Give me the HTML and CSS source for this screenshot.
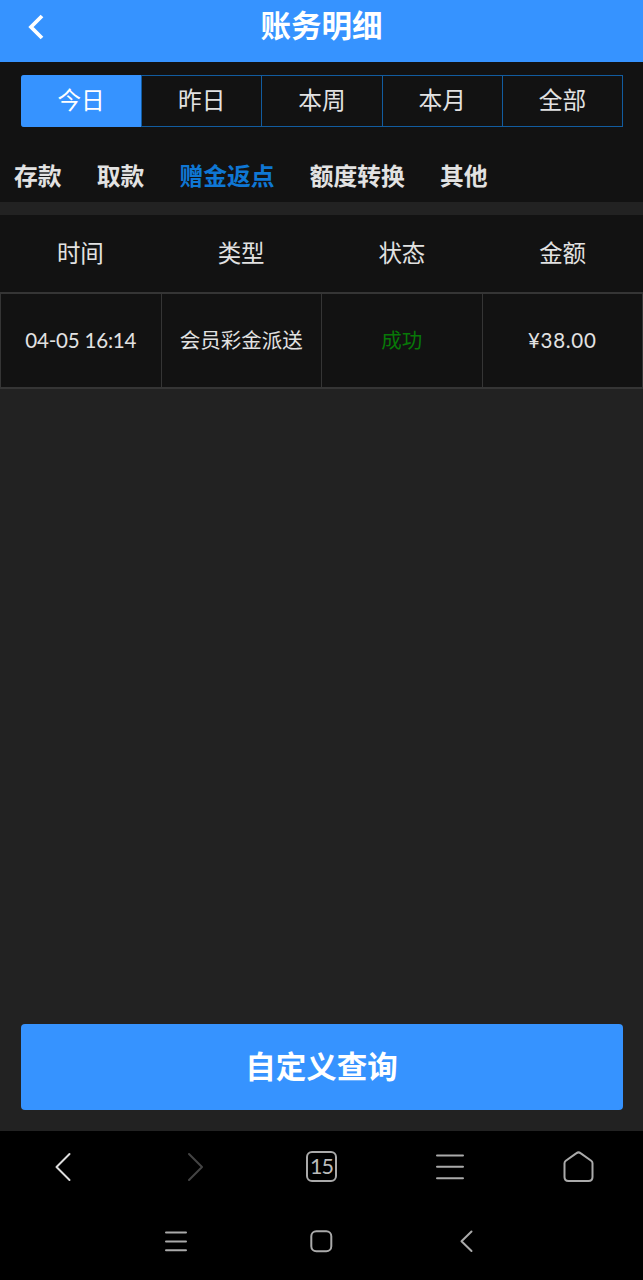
FILE: index.html
```html
<!DOCTYPE html>
<html lang="zh-CN">
<head>
    <meta charset="UTF-8">
    <meta name="viewport" content="width=device-width, initial-scale=1.0">
    <title>账务明细</title>
    <link rel="stylesheet" href="styles.css">
</head>
<body>

<header class="header">
    <svg class="back" width="20" height="28" viewBox="0 0 20 28"><path d="M16 3 L5 14 L16 25"/></svg>
    <h1 class="title">账务明细</h1>
</header>

<section class="filters">
    <div class="periods">
        <div class="period active">今日</div>
        <div class="period">昨日</div>
        <div class="period">本周</div>
        <div class="period">本月</div>
        <div class="period">全部</div>
    </div>
    <div class="types">
        <span>存款</span>
        <span>取款</span>
        <span class="active">赠金返点</span>
        <span>额度转换</span>
        <span>其他</span>
    </div>
</section>

<main class="records">
    <div class="row head">
        <div>时间</div>
        <div>类型</div>
        <div>状态</div>
        <div>金额</div>
    </div>
    <div class="row record">
        <div class="time">04-05 16:14</div>
        <div>会员彩金派送</div>
        <div class="success">成功</div>
        <div class="amount">¥38.00</div>
    </div>
</main>

<div class="footer">
    <button class="query">自定义查询</button>
</div>

<nav class="browser-bar">
    <svg class="bright" width="32" height="32" viewBox="0 0 32 32"><path d="M21.5 3 L8.5 16 L21.5 29"/></svg>
    <svg class="dim" width="32" height="32" viewBox="0 0 32 32"><path d="M12 3 L25 16 L12 29"/></svg>
    <span class="tabs">15</span>
    <svg width="32" height="32" viewBox="0 0 32 32"><path d="M3 4.5 H29 M3 15.8 H29 M3 27.2 H29"/></svg>
    <svg width="32" height="32" viewBox="0 0 32 32"><path d="M13.5 2.1 Q15.5 .6 17.5 2.1 L28.2 9.7 Q29.5 10.7 29.5 12.3 V26 Q29.5 30 25.5 30 H5.5 Q1.5 30 1.5 26 V12.3 Q1.5 10.7 2.8 9.7 Z"/></svg>
</nav>

<nav class="system-bar">
    <svg width="24" height="24" viewBox="0 0 24 24"><path d="M2 3.5 H22 M2 12.4 H22 M2 21.2 H22"/></svg>
    <svg width="24" height="24" viewBox="0 0 24 24"><rect x="2.3" y="2.3" width="20" height="20" rx="5"/></svg>
    <svg width="24" height="24" viewBox="0 0 24 24"><path d="M16.5 2.5 L6.5 12.3 L16.5 22"/></svg>
</nav>

</body>
</html>
```
FILE: styles.css
```css
* {
    box-sizing: border-box;
}

body {
    display: flex;
    flex-direction: column;
    height: 1280px;
    margin: 0;
    background-color: #222;
    color: #e2e2e2;
    font-family: Lato, "Noto Sans CJK SC", sans-serif;
}

svg {
    fill: none;
    stroke: #aaa;
    stroke-width: 2;
    stroke-linecap: round;
    stroke-linejoin: round;
}

.header {
    display: grid;
    grid-template-columns: 60px 1fr 60px;
    align-items: center;
    height: 62px;
    padding-bottom: 9px;
    background-color: #3693ff;
}

.back {
    margin-left: 26px;
    stroke: #fff;
    stroke-width: 3.8;
    stroke-linecap: butt;
    stroke-linejoin: miter;
}

.title {
    margin: 0;
    padding-bottom: 3px;
    color: #fff;
    font-size: 30.5px;
    font-weight: bold;
    line-height: 50px;
    text-align: center;
}

.filters {
    height: 140px;
    padding: 13px 20px 0 21px;
    background-color: #121212;
}

.periods {
    display: grid;
    grid-template-columns: repeat(5, 1fr);
    height: 52px;
    border: 1px solid #125c9f;
    border-left: none;
    border-radius: 3px 0 0 3px;
}

.period {
    font-size: 23.7px;
    line-height: 49px;
    text-align: center;
}

.period + .period {
    border-left: 1px solid #125c9f;
}

.period.active {
    margin: -1px 0;
    border-radius: 3px 0 0 3px;
    background-color: #3693ff;
    color: #fff;
    line-height: 51px;
}

.types {
    display: flex;
    gap: 35.1px;
    margin: 31px 0 0 -7px;
    font-size: 23.8px;
    font-weight: bold;
    line-height: 36px;
}

.types .active {
    color: #0f77d4;
}

.records {
    flex: 1;
    margin-top: 13px;
}

.row {
    display: grid;
    grid-template-columns: repeat(4, 1fr);
    background-color: #121212;
    text-align: center;
}

.head {
    height: 77px;
    font-size: 23.5px;
    line-height: 76px;
}

.record {
    height: 97px;
    border: 1px solid #353535;
    border-width: 2px 1px 2px 0;
    font-size: 20.5px;
    line-height: 93px;
}

.record div {
    border-left: 1px solid #353535;
}

.record .time {
    letter-spacing: -0.2px;
}

.record .amount {
    letter-spacing: 0.7px;
}

.record .success {
    color: #087808;
}

.footer {
    padding: 0 20px 21px 21px;
}

.query {
    display: block;
    width: 100%;
    height: 86px;
    padding: 0 1px 4px 0;
    border: none;
    border-radius: 4px;
    background-color: #3693ff;
    color: #fff;
    font-family: inherit;
    font-size: 30.5px;
    font-weight: bold;
}

.browser-bar {
    display: grid;
    grid-template-columns: repeat(5, 1fr);
    place-items: center;
    height: 71px;
    background-color: #000;
}

.browser-bar .bright {
    stroke: #ddd;
}

.browser-bar .dim {
    stroke: #444;
}

.tabs {
    width: 31px;
    height: 31px;
    border: 2px solid #aaa;
    border-radius: 6px;
    color: #bbb;
    font-size: 21.5px;
    letter-spacing: -1px;
    line-height: 26px;
    text-align: center;
}

.system-bar {
    display: grid;
    grid-template-columns: repeat(3, 1fr);
    place-items: center;
    height: 78px;
    padding: 0 103px;
    background-color: #000;
}
```
